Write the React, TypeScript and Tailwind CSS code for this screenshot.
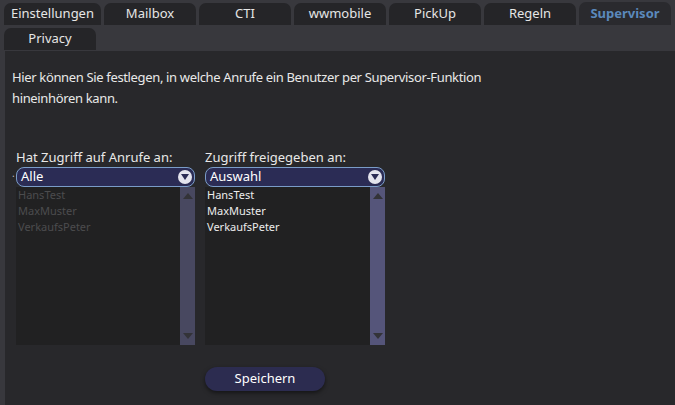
import React from 'react';

const tabs = ['Einstellungen', 'Mailbox', 'CTI', 'wwmobile', 'PickUp', 'Regeln', 'Supervisor'];
const users = ['HansTest', 'MaxMuster', 'VerkaufsPeter'];

const Tab = ({ label, active, wide }: { label: string; active?: boolean; wide?: boolean }) => (
  <div
    className={`h-[22px] ${wide ? 'w-[97px]' : 'w-[92px]'} rounded-t-[7px] flex items-center justify-center text-[13px] ${
      active ? 'bg-[#2a2a2e] text-[#5b89bc] font-bold h-[23px]' : 'bg-[#252528] text-[#e6e6e6]'
    }`}
  >
    {label}
  </div>
);

const Select = ({ value }: { value: string }) => (
  <div className="h-[20px] rounded-[8px] border border-[#7a9cc8] bg-[#2b2c55] flex items-center pl-[4px] pr-[2px] text-[13px] text-white">
    <span className="flex-1">{value}</span>
    <span className="w-[14px] h-[14px] rounded-full bg-[#e4e4ee] flex items-center justify-center">
      <svg width="8" height="6" viewBox="0 0 8 6">
        <path d="M0 0 H8 L4 6 Z" fill="#2b2c55" />
      </svg>
    </span>
  </div>
);

const List = ({ dim }: { dim?: boolean }) => (
  <div className="h-[158px] flex bg-[#212122]">
    <div className={`flex-1 pl-[2px] text-[11px] leading-[16px] ${dim ? 'text-[#4c4c4e]' : 'text-[#ececec]'}`}>
      {users.map((u) => (
        <div key={u}>{u}</div>
      ))}
    </div>
    <div className={`w-[15px] flex flex-col justify-between items-center py-[6px] ${dim ? 'bg-[#484860]' : 'bg-[#55557a]'}`}>
      <svg width="10" height="6" viewBox="0 0 10 6">
        <path d="M0 6 H10 L5 0 Z" fill="#333338" />
      </svg>
      <svg width="10" height="6" viewBox="0 0 10 6">
        <path d="M0 0 H10 L5 6 Z" fill="#333338" />
      </svg>
    </div>
  </div>
);

export default function App() {
  return (
    <div
      className="w-[675px] h-[405px] bg-[#38383d] overflow-hidden flex flex-col"
      style={{ fontFamily: '"Noto Sans", "Liberation Sans", sans-serif' }}
    >
      <div className="flex items-end gap-[3px] pl-[4px] pt-[2px]">
        {tabs.map((t) => (
          <Tab key={t} label={t} active={t === 'Supervisor'} wide={t === 'Einstellungen'} />
        ))}
      </div>
      <div className="flex pl-[4px] pt-[3px]">
        <Tab label="Privacy" />
      </div>
      <div className="flex-1 ml-[5px] mt-[1px] bg-[#28282b] pl-[7px] pt-[16px] text-[#e8e8e8]">
        <p className="text-[13px] leading-[21px] tracking-[-0.35px] w-[500px]">
          Hier können Sie festlegen, in welche Anrufe ein Benutzer per Supervisor-Funktion hineinhören kann.
        </p>
        <div className="flex gap-[10px] mt-[40px] pl-[4px]">
          <div className="w-[179px] relative">
            <div className="text-[13px] leading-[17px] mb-[1px]">Hat Zugriff auf Anrufe an:</div>
            <span className="absolute left-[-4px] top-[19px] text-[10px] leading-none text-[#bbbbbb]">.</span>
            <Select value="Alle" />
            <List dim />
          </div>
          <div className="w-[180px]">
            <div className="text-[13px] leading-[17px] mb-[1px]">Zugriff freigegeben an:</div>
            <Select value="Auswahl" />
            <List />
          </div>
        </div>
        <div className="pl-[193px] mt-[20px]">
          <button className="w-[120px] h-[24px] rounded-full bg-[#2c2c50] text-[13px] text-white shadow-[0_2px_4px_rgba(0,0,0,0.5)]">
            Speichern
          </button>
        </div>
      </div>
    </div>
  );
}
